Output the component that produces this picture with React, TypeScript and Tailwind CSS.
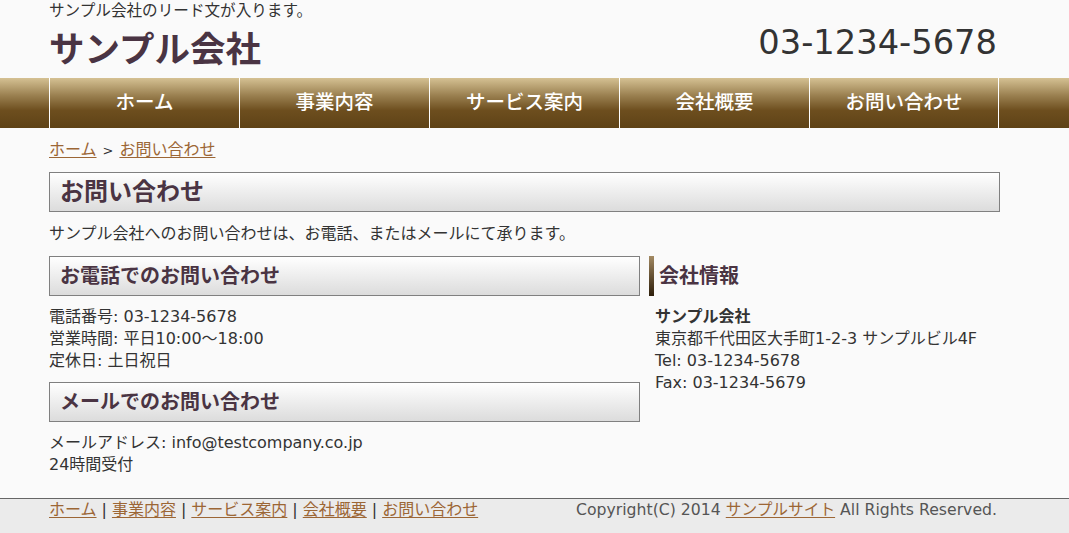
import React from "react";

const font = { fontFamily: '"DejaVu Sans", "Noto Sans CJK JP", "Noto Sans", sans-serif' };

const navItems = ["ホーム", "事業内容", "サービス案内", "会社概要", "お問い合わせ"];

function BoxHeading({ children, big }: { children: React.ReactNode; big?: boolean }) {
  return (
    <div
      className={`border border-[#808080] bg-gradient-to-b from-white to-[#dcdcdc] h-[40px] flex items-center font-bold text-[#4a3443] ${
        big ? "text-[24px] pl-[10px]" : "text-[20px] pl-[10px]"
      }`}
    >
      {children}
    </div>
  );
}

export default function App() {
  return (
    <div className="min-h-[533px] bg-[#fafafa] text-[#333] text-[16px]" style={font}>
      <header className="ml-[49px] w-[951px] h-[78px] flex justify-between">
        <div>
          <p className="leading-[22px] text-[15.6px]">サンプル会社のリード文が入ります。</p>
          <h1 className="text-[35.5px] font-bold leading-[48px] mt-[4px] text-[#4a3443]">サンプル会社</h1>
        </div>
        <div className="pt-[20px] pr-[3px] text-[33.7px] leading-[46px] text-[#333]">03-1234-5678</div>
      </header>
      <nav className="h-[50px] bg-[linear-gradient(to_bottom,#d5c193_0%,#9a8050_35%,#6d4e1e_65%,#5e4216_100%)]">
        <ul className="ml-[49px] w-[951px] flex h-full">
          {navItems.map((n, i) => (
            <li
              key={n}
              className={`w-[190px] h-full flex items-center justify-center border-l border-white text-white text-[19.5px] font-medium ${
                i === navItems.length - 1 ? "border-r" : ""
              }`}
            >
              {n}
            </li>
          ))}
        </ul>
      </nav>
      <main className="ml-[49px] w-[951px]">
        <div className="mt-[11px] leading-[22px]">
          <a className="text-[#9c6635] underline underline-offset-2">ホーム</a>
          <span className="mx-[6px] text-[13px]">&gt;</span>
          <a className="text-[#9c6635] underline underline-offset-2">お問い合わせ</a>
        </div>
        <div className="mt-[10px]">
          <BoxHeading big>お問い合わせ</BoxHeading>
        </div>
        <p className="mt-[11px] leading-[22px]">サンプル会社へのお問い合わせは、お電話、またはメールにて承ります。</p>
        <div className="mt-[11px] flex gap-[9px]">
          <div className="w-[591px]">
            <BoxHeading>お電話でのお問い合わせ</BoxHeading>
            <div className="mt-[10px] leading-[22px]">
              <p>電話番号: 03-1234-5678</p>
              <p>営業時間: 平日10:00〜18:00</p>
              <p>定休日: 土日祝日</p>
            </div>
            <div className="mt-[10px]">
              <BoxHeading>メールでのお問い合わせ</BoxHeading>
            </div>
            <div className="mt-[10px] leading-[22px]">
              <p>メールアドレス: info@testcompany.co.jp</p>
              <p>24時間受付</p>
            </div>
          </div>
          <div className="w-[351px]">
            <div className="h-[40px] flex items-center">
              <div className="w-[5px] h-full bg-gradient-to-b from-[#a38a63] to-[#2e1f0b]" />
              <span className="ml-[5px] text-[20px] font-bold text-[#4a3443]">会社情報</span>
            </div>
            <div className="mt-[10px] leading-[22px] pl-[6px]">
              <p className="font-bold">サンプル会社</p>
              <p>東京都千代田区大手町1-2-3 サンプルビル4F</p>
              <p>Tel: 03-1234-5678</p>
              <p>Fax: 03-1234-5679</p>
            </div>
          </div>
        </div>
      </main>
      <footer className="mt-[22px] border-t border-[#666] bg-[#ebebeb] h-[36px]">
        <div className="ml-[49px] w-[951px] flex justify-between leading-[22px] pr-[3px]">
          <div>
            {navItems.map((n, i) => (
              <span key={n}>
                {i > 0 && <span className="mx-[5px]">|</span>}
                <a className="text-[#9c6635] underline underline-offset-2">{n}</a>
              </span>
            ))}
          </div>
          <div className="text-[#555] text-[15.7px]">
            Copyright(C) 2014 <a className="text-[#9c6635] underline underline-offset-2">サンプルサイト</a> All Rights Reserved.
          </div>
        </div>
      </footer>
    </div>
  );
}
